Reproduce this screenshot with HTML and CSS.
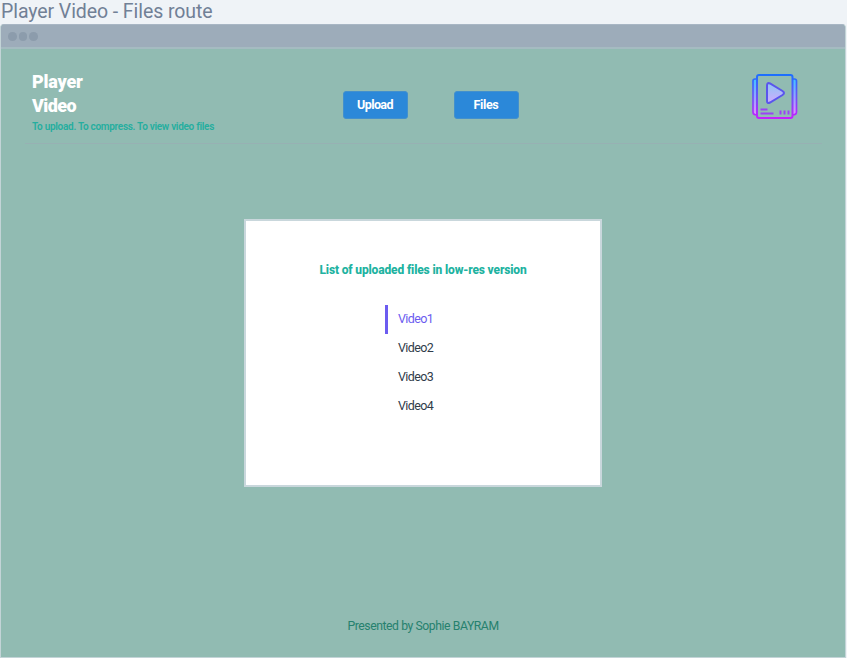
FILE: index.html
```html
<!DOCTYPE html>
<html lang="en">
<head>
<meta charset="utf-8">
<title>Player Video - Files route</title>
<link rel="stylesheet" href="styles.css">
</head>
<body>
<h1 class="frame-title"><span>Player Video - Files route</span></h1>
<div class="window">
  <div class="titlebar"><i></i><i></i><i></i></div>
  <div class="page">
    <header class="header">
      <div class="brand">
        <div class="name"><span class="n1">Player</span><br><span class="n2">Video</span></div>
        <p class="tagline"><span>To upload. To compress. To view video files</span></p>
      </div>
      <nav class="nav">
        <button class="upload">Upload</button>
        <button class="files">Files</button>
      </nav>
      <svg class="logo" width="46" height="46" viewBox="0 0 46 46" fill="none">
        <defs>
          <linearGradient id="line" gradientUnits="userSpaceOnUse" x1="0" y1="0" x2="0" y2="46"><stop stop-color="#1b70ff"/><stop offset=".5" stop-color="#6c54f5"/><stop offset="1" stop-color="#cb1cff"/></linearGradient>
          <linearGradient id="side" x1="0" y1="0" x2="0" y2="1"><stop stop-color="#43c2ff"/><stop offset="1" stop-color="#e38cff"/></linearGradient>
          <linearGradient id="tri" x1="0" y1="0" x2="0" y2="1"><stop stop-color="#8fc6f2"/><stop offset="1" stop-color="#cfaaff"/></linearGradient>
        </defs>
        <path d="M5 5H3Q1 5 1 7V38Q1 41 5 41ZM40 5H42.500Q44.500 5 44.500 7V38Q44.500 41 40 41Z" fill="url(#side)" stroke="url(#line)" stroke-width="1.7"/>
        <rect x="5" y="1" width="35.500" height="43" rx="2" fill="#91bbb2" stroke="url(#line)" stroke-width="2"/>
        <path d="M15 12Q15 8 18 9.500L30.500 17Q33.500 19 30.500 21L18 28.500Q15 30 15 27Z" fill="url(#tri)" stroke="#5a55ed" stroke-width="2"/>
        <path d="M8.500 35.500H15.500M8.500 39.500H21.500M28.500 36.500V40.500M32.500 36.500V40.500M36.500 36.500V40.500" stroke="#9a43f5" stroke-width="2"/>
      </svg>
    </header>
    <main class="card">
      <h2><span>List of uploaded files in low-res version</span></h2>
      <ul class="list">
        <li class="active"><span>Video1</span></li>
        <li><span>Video2</span></li>
        <li><span>Video3</span></li>
        <li><span>Video4</span></li>
      </ul>
    </main>
    <footer class="footer"><span>Presented by Sophie BAYRAM</span></footer>
  </div>
</div>
</body>
</html>
```
FILE: styles.css
```css
* { box-sizing: border-box; }
body { margin: 0; width: 847px; height: 658px; overflow: hidden; background: #eff3f7; font-family: Roboto, sans-serif; }
h1, h2, p, ul { margin: 0; padding: 0; }
.frame-title { height: 24px; padding-left: 1px; font-size: 19.5px; line-height: 24px; font-weight: 400; color: #718096; white-space: nowrap; letter-spacing: -.08px; }
.window { width: 846px; height: 634px; border: 1px solid #c3d4d7; border-top-color: #a8b6c4; border-radius: 4px 4px 0 0; overflow: hidden; background: #91bbb2; }
.titlebar { height: 24px; display: flex; align-items: center; gap: 2px; padding: 1px 0 0 7px; background: #9dacba; border-bottom: 2px solid #a5bbc1; }
.titlebar i { width: 8.500px; height: 8.500px; border-radius: 50%; background: #8c9cac; }
.page { height: 608px; display: flex; flex-direction: column; align-items: center; }
.header { width: 797px; height: 95px; display: flex; align-items: flex-start; border-bottom: 1px solid #97b1b3; padding-left: 7.500px; }
.brand { width: 310.500px; padding-top: 21px; white-space: nowrap; }
.name { font-size: 18px; line-height: 24px; font-weight: 900; color: #fff; letter-spacing: -.2px; }
.n2 { letter-spacing: -.6px; }
.tagline { font-size: 10px; line-height: 18px; font-weight: 600; color: #25ae9f; letter-spacing: -.29px; }
.nav { display: flex; gap: 46px; padding-top: 42px; }
.nav button { width: 65px; height: 28px; padding: 0 0 2px; border: 1px solid #4390cc; border-radius: 3px; background: #2b88d9; color: #fff; font: 700 12.500px Roboto, sans-serif; letter-spacing: -.6px; }
.nav .files { letter-spacing: -.35px; }
.logo { margin: 25px 24px 0 auto; }
.card { width: 358px; height: 268px; margin-top: 75px; border: 2px solid #c9d7dc; background: #fff; }
.card h2 { margin-top: 39px; text-align: center; font-size: 12px; line-height: 20px; font-weight: 800; color: #20b2a0; white-space: nowrap; letter-spacing: -.15px; }
.list { width: 75px; margin: 25px 0 0 139px; list-style: none; }
.list li { height: 29px; padding-left: 10px; border-left: 3px solid transparent; font-size: 12.500px; line-height: 28px; color: #303c4a; letter-spacing: -.6px; }
.list .active { border-color: #6c5cf0; color: #6c5cf0; }
.footer { margin-top: 129px; font-size: 12.200px; line-height: 20px; color: #26816e; letter-spacing: -.42px; white-space: nowrap; }
```
